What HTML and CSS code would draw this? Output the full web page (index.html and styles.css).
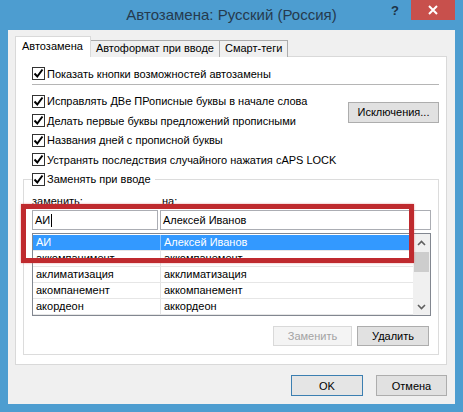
FILE: index.html
```html
<!DOCTYPE html>
<html lang="ru">
    <head>
        <meta charset="UTF-8"/>
        <title>Автозамена: Русский (Россия)</title>
        <link rel="stylesheet" href="styles.css">
    </head>
    <body>
        <div class="window">
            <div class="titlebar">
                <span></span>
                <h1 class="title">Автозамена: Русский (Россия)</h1>
                <div class="controls">
                    <span class="help">?</span>
                    <span class="close">
                        <svg width="10" height="10" viewBox="0 0 10 10"><path d="M1 1 L9 9 M9 1 L1 9" stroke="#fff" stroke-width="2"/></svg>
                    </span>
                </div>
            </div>

            <div class="client">
                <div class="tabs">
                    <div class="tab active">Автозамена</div>
                    <div class="tab">Автоформат при вводе</div>
                    <div class="tab">Смарт-теги</div>
                </div>

                <div class="panel">
                    <label class="check-row">
                        <span class="check"><svg width="11" height="11" viewBox="0 0 11 11"><path d="M1.5 5.5 L4.3 8.5 L9.5 1.5" fill="none" stroke="#000" stroke-width="2"/></svg></span>
                        Показать кнопки возможностей автозамены
                    </label>
                    <div class="sep"></div>

                    <div class="options">
                        <div class="option-list">
                            <label class="check-row">
                                <span class="check"><svg width="11" height="11" viewBox="0 0 11 11"><path d="M1.5 5.5 L4.3 8.5 L9.5 1.5" fill="none" stroke="#000" stroke-width="2"/></svg></span>
                                Исправлять ДВе ПРописные буквы в начале слова
                            </label>
                            <label class="check-row">
                                <span class="check"><svg width="11" height="11" viewBox="0 0 11 11"><path d="M1.5 5.5 L4.3 8.5 L9.5 1.5" fill="none" stroke="#000" stroke-width="2"/></svg></span>
                                Делать первые буквы предложений прописными
                            </label>
                            <label class="check-row">
                                <span class="check"><svg width="11" height="11" viewBox="0 0 11 11"><path d="M1.5 5.5 L4.3 8.5 L9.5 1.5" fill="none" stroke="#000" stroke-width="2"/></svg></span>
                                Названия дней с прописной буквы
                            </label>
                            <label class="check-row">
                                <span class="check"><svg width="11" height="11" viewBox="0 0 11 11"><path d="M1.5 5.5 L4.3 8.5 L9.5 1.5" fill="none" stroke="#000" stroke-width="2"/></svg></span>
                                Устранять последствия случайного нажатия cAPS LOCK
                            </label>
                        </div>
                        <button class="btn btn-except">Исключения...</button>
                    </div>

                    <fieldset class="group">
                        <legend>
                            <label class="check-row">
                                <span class="check"><svg width="11" height="11" viewBox="0 0 11 11"><path d="M1.5 5.5 L4.3 8.5 L9.5 1.5" fill="none" stroke="#000" stroke-width="2"/></svg></span>
                                Заменять при вводе
                            </label>
                        </legend>

                        <div class="field-labels">
                            <span class="label-from">заменить:</span>
                            <span>на:</span>
                        </div>
                        <div class="fields">
                            <div class="input input-from">АИ<span class="caret"></span></div>
                            <div class="input input-to">Алексей Иванов</div>
                        </div>

                        <div class="list">
                            <div class="rows">
                                <div class="row selected"><span>АИ</span><span>Алексей Иванов</span></div>
                                <div class="row"><span>аккомпанимент</span><span>аккомпанемент</span></div>
                                <div class="row"><span>аклиматизация</span><span>акклиматизация</span></div>
                                <div class="row"><span>акомпанемент</span><span>аккомпанемент</span></div>
                                <div class="row"><span>акордеон</span><span>аккордеон</span></div>
                            </div>
                            <div class="scrollbar">
                                <div class="arrow"><svg width="9" height="6" viewBox="0 0 9 6"><path d="M1 5 L4.5 1.5 L8 5" fill="none" stroke="#606060" stroke-width="1.6"/></svg></div>
                                <div class="thumb"></div>
                                <div class="track"></div>
                                <div class="arrow"><svg width="9" height="6" viewBox="0 0 9 6"><path d="M1 1 L4.5 4.5 L8 1" fill="none" stroke="#606060" stroke-width="1.6"/></svg></div>
                            </div>
                        </div>

                        <div class="group-buttons">
                            <button class="btn btn-replace" disabled>Заменить</button>
                            <button class="btn btn-delete">Удалить</button>
                        </div>
                    </fieldset>
                </div>

                <div class="dialog-buttons">
                    <button class="btn btn-ok">OK</button>
                    <button class="btn btn-cancel">Отмена</button>
                </div>
            </div>

            <!-- красная рамка поверх полей -->
            <div class="highlight"></div>
        </div>
    </body>
</html>
```

FILE: styles.css
```css
* { margin: 0; padding: 0; box-sizing: border-box; }
body { background: #4d9dd0; font-family: "Liberation Sans", "Noto Sans", sans-serif; font-size: 11px; color: #000; }

.window { width: 463px; height: 412px; background: #4d9dd0; position: relative; }

.titlebar { height: 30px; display: grid; grid-template-columns: 1fr auto 1fr; }
.title { font-size: 15px; font-weight: normal; color: #253a4e; line-height: 30px; white-space: nowrap; }
.controls { justify-self: end; display: flex; align-items: flex-start; margin-right: 8px; }
.help { font-size: 13px; font-weight: bold; color: #1d3346; width: 26px; text-align: center; line-height: 22px; margin-right: 3px; }
.close { width: 44px; height: 20px; background: #c8504c; display: flex; align-items: center; justify-content: center; }

.client { margin: 0 8px; height: 374px; background: #f0f0f0; padding: 7px 8px 0 7px; }

.tabs { display: flex; align-items: flex-end; height: 20px; margin-bottom: -1px; position: relative; }
.tab { height: 17px; line-height: 15px; padding: 0 5px; background: #f0f0f0; border: 1px solid #acacac; border-bottom: none; margin-left: -1px; white-space: nowrap; }
.tab.active { height: 21px; line-height: 19px; background: #fff; border-color: #d9d9d9; margin-left: 0; padding: 0 7px 0 6px; position: relative; z-index: 1; }

.panel { height: 309px; background: #fff; border: 1px solid #d9d9d9; padding: 7px 7px 0 7px; }

.check-row { display: flex; align-items: center; height: 19.5px; margin-left: 9px; white-space: nowrap; }
.check { width: 13px; height: 13px; border: 1px solid #333; background: #fff; margin-right: 2px; display: flex; align-items: center; justify-content: center; }

.sep { height: 1px; background: #b5b5b5; margin: 0 0 7px 9px; }

.options { display: flex; }
.option-list { flex: 1; }
.btn { font-family: inherit; font-size: 11px; background: #e1e1e1; border: 1px solid #adadad; color: #000; height: 21px; }
.btn-except { width: 91px; margin-top: 10px; }

.group { border: 1px solid #dcdcdc; margin: 0; padding: 0 7px 8px 8px; min-width: 0; }
.group legend { padding-right: 4px; }
.group legend .check-row { margin-left: 0; }

.field-labels { display: flex; height: 15px; line-height: 15px; margin-top: 5px; }
.label-from { width: 130px; }

.fields { display: flex; margin-top: 1px; }
.input { height: 20px; line-height: 18px; border: 1px solid #abadb3; padding: 0 2px; background: #fff; display: flex; align-items: center; }
.input-from { width: 126px; }
.input-to { flex: 1; margin-left: 2px; }
.caret { width: 1px; height: 13px; background: #000; margin-left: 1px; }

.list { display: flex; height: 83px; margin-top: 3px; border: 1px solid #828790; }
.rows { flex: 1; padding-top: 1px; overflow: hidden; }
.row { display: grid; grid-template-columns: 127px 1fr; height: 16px; line-height: 15px; border-bottom: 1px solid #e6e6e6; }
.row span { padding-left: 3px; white-space: nowrap; }
.row span + span { border-left: 1px solid #e3e3e3; }
.row.selected { background: #3399ff; color: #fff; }
.row.selected span + span { border-left-color: #8cc4ff; }

.scrollbar { width: 17px; background: #f0f0f0; display: flex; flex-direction: column; }
.arrow { height: 17px; display: flex; align-items: center; justify-content: center; }
.thumb { height: 20px; background: #cdcdcd; margin: 1px 1px 0; }
.track { flex: 1; }

.group-buttons { display: flex; justify-content: flex-end; gap: 5px; margin-top: 10px; padding-right: 2px; }
.btn-replace { width: 79px; height: 20px; background: #f4f4f4; border-color: #d9d9d9; color: #a3a3a3; }
.btn-delete { width: 72px; height: 20px; }

.dialog-buttons { display: flex; justify-content: flex-end; gap: 13px; margin-top: 10px; }
.btn-ok { width: 72px; border-color: #3c7fb1; background: #e5e5e5; }
.btn-cancel { width: 71px; }

.highlight { position: absolute; left: 21px; top: 204px; width: 393px; height: 59px; border: 5px solid #bf2a2e; box-shadow: 0 0 2px rgba(220, 90, 90, 0.6); }
```
